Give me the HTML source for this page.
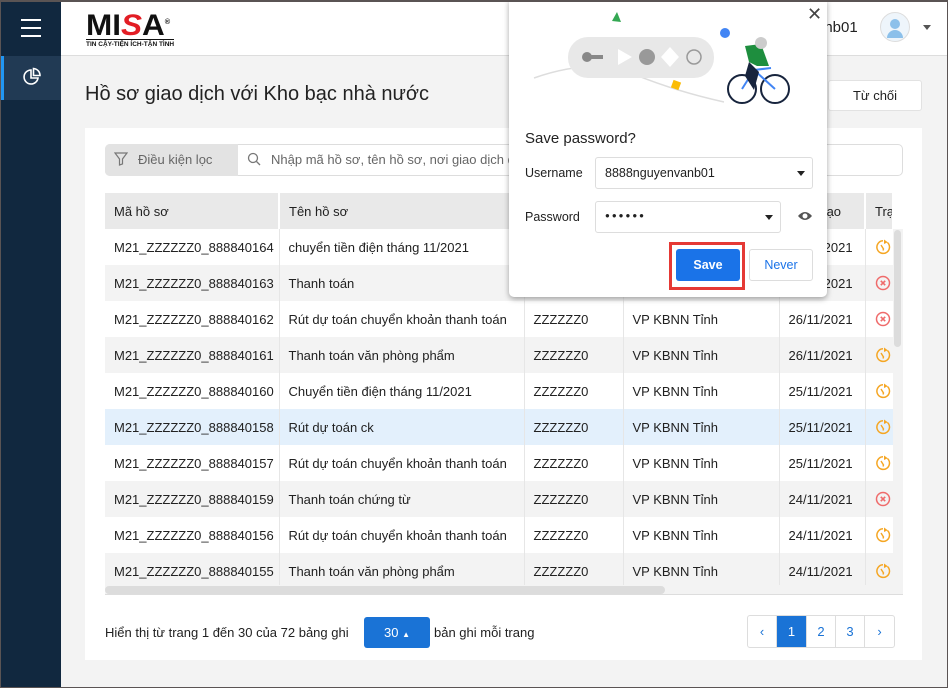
<!DOCTYPE html>
<html><head><meta charset="utf-8"><style>
*{box-sizing:border-box;margin:0;padding:0}
body{width:948px;height:688px;overflow:hidden;font-family:"Liberation Sans",sans-serif;color:#212121;background:#f3f3f3;position:relative;font-size:13px}
.frame{position:absolute;left:0;top:0;width:948px;height:688px;border:1px solid #5a5454;border-top:2px solid #5a5454;pointer-events:none;z-index:50}
.side{position:absolute;left:0;top:0;width:61px;height:688px;background:#11283f}
.hdr{position:absolute;left:61px;top:0;right:0;height:56px;background:#fff;border-bottom:1px solid #ddd}
.abs{position:absolute}
.card{position:absolute;left:85px;top:128px;width:837px;height:532px;background:#fff}
table{border-collapse:collapse;position:absolute;left:105px;top:193px;width:788px;table-layout:fixed}
td,th{height:36px;padding:0 9px;white-space:nowrap;overflow:hidden;text-align:left;font-weight:normal;border-right:1px solid #e6e6e6;font-size:13px}
th{background:#e9e9e9;border-right:2px solid #fff}
tr:nth-child(odd) td{background:#f3f3f3}
tr.sel td{background:#e3f0fc}
td svg{display:block}
.pg{position:absolute;top:615px;height:33px;border:1px solid #ddd;display:flex;background:#fff;border-radius:3px}
.pg div{width:29px;text-align:center;line-height:31px;color:#1a73d6;border-right:1px solid #ddd;font-size:13px}
</style></head><body>
<svg width="0" height="0" style="position:absolute"><defs>
<symbol id="ok" viewBox="0 0 16 16"><path d="M12.5 3.5A6.3 6.3 0 1 1 8 1.8" fill="none" stroke="#f5a623" stroke-width="1.5"/><path d="M9 0.5L12.8 3.3L9 5Z" fill="#f5a623"/><path d="M6 6L8.5 10L8 11.5" fill="none" stroke="#f5a623" stroke-width="1.4"/></symbol>
<symbol id="no" viewBox="0 0 16 16"><circle cx="8" cy="8" r="6.5" fill="none" stroke="#ef6b6b" stroke-width="1.5"/><path d="M5.8 5.8L10.2 10.2M10.2 5.8L5.8 10.2" stroke="#ef6b6b" stroke-width="1.6"/></symbol>
</defs></svg>
<div class="side">
  <div class="abs" style="left:21px;top:19px;width:20px;height:2px;background:#fff;box-shadow:0 8px 0 #fff,0 16px 0 #fff"></div>
  <div class="abs" style="left:0;top:56px;width:61px;height:44px;background:#213a54"></div>
  <div class="abs" style="left:0;top:56px;width:4px;height:44px;background:#2196f3"></div>
  <svg class="abs" style="left:22px;top:67px" width="20" height="20" viewBox="0 0 20 20" fill="none" stroke="#fff" stroke-width="1.6"><path d="M9 3A7 7 0 1 0 16 11H9Z"/><path d="M11.5 1.5V8.5H18A7 7 0 0 0 11.5 1.5Z"/></svg>
</div>
<div class="hdr">
  <div class="abs" style="left:25px;top:9px;font:900 30px 'Liberation Sans';letter-spacing:0px;color:#111;transform:scaleX(1.05);transform-origin:left">MI<span style="color:#e21d24;font-style:italic">S</span>A<sup style="font-size:7px">®</sup></div>
  <div class="abs" style="left:25px;top:39px;font-size:6.5px;font-weight:bold;color:#111;border-top:1px solid #111;padding-top:1px">TIN CẬY-TIỆN ÍCH-TẬN TÌNH</div>
  <div class="abs" style="left:755px;top:19px;font-size:15px">anb01</div>
  <div class="abs" style="left:819px;top:12px;width:30px;height:30px;border-radius:50%;border:1px solid #ddd;background:#eef5fb"><div style="margin:6px auto 0;width:10px;height:10px;border-radius:50%;background:#8cc0ea"></div><div style="margin:1px auto 0;width:16px;height:8px;border-radius:8px 8px 0 0;background:#8cc0ea"></div></div>
  <div class="abs" style="left:862px;top:25px;border:4px solid transparent;border-top:5px solid #555"></div>
</div>
<div class="abs" style="left:85px;top:83px;font-size:20px;color:#222">Hồ sơ giao dịch với Kho bạc nhà nước</div>
<div class="abs" style="left:828px;top:80px;width:94px;height:31px;background:#fff;border:1px solid #e2e2e2;border-radius:3px;text-align:center;line-height:29px">Từ chối</div>
<div class="card"></div>
<div class="abs" style="left:105px;top:144px;width:798px;height:32px;border:1px solid #ddd;border-radius:5px;background:#fff"></div>
<div class="abs" style="left:105px;top:144px;width:133px;height:32px;background:#e3e3e3;border-radius:5px 0 0 5px;color:#666;line-height:32px;padding-left:33px">Điều kiện lọc</div>
<svg class="abs" style="left:114px;top:152px" width="14" height="14" viewBox="0 0 14 14" fill="none" stroke="#777" stroke-width="1.2"><path d="M1 1H13L8.5 7V12L5.5 13V7Z"/></svg>
<svg class="abs" style="left:247px;top:152px" width="14" height="14" viewBox="0 0 14 14" fill="none" stroke="#777" stroke-width="1.3"><circle cx="6" cy="6" r="4.5"/><path d="M9.5 9.5L13 13"/></svg>
<div class="abs" style="left:271px;top:152px;color:#666">Nhập mã hồ sơ, tên hồ sơ, nơi giao dịch để</div>
<table>
<colgroup><col style="width:174px"><col style="width:245px"><col style="width:99px"><col style="width:156px"><col style="width:86px"><col style="width:28px"></colgroup>
<tr><th>Mã hồ sơ</th><th>Tên hồ sơ</th><th></th><th></th><th>Ngày tạo</th><th>Trạng</th></tr>
<tr><td>M21_ZZZZZZ0_888840164</td><td>chuyển tiền điện tháng 11/2021</td><td>ZZZZZZ0</td><td>VP KBNN Tỉnh</td><td>26/11/2021</td><td><svg width="16" height="16"><use href="#ok"/></svg></td></tr>
<tr><td>M21_ZZZZZZ0_888840163</td><td>Thanh toán</td><td>ZZZZZZ0</td><td>VP KBNN Tỉnh</td><td>26/11/2021</td><td><svg width="16" height="16"><use href="#no"/></svg></td></tr>
<tr><td>M21_ZZZZZZ0_888840162</td><td> Rút dự toán chuyển khoản thanh toán</td><td>ZZZZZZ0</td><td>VP KBNN Tỉnh</td><td>26/11/2021</td><td><svg width="16" height="16"><use href="#no"/></svg></td></tr>
<tr><td>M21_ZZZZZZ0_888840161</td><td>Thanh toán văn phòng phẩm</td><td>ZZZZZZ0</td><td>VP KBNN Tỉnh</td><td>26/11/2021</td><td><svg width="16" height="16"><use href="#ok"/></svg></td></tr>
<tr><td>M21_ZZZZZZ0_888840160</td><td>Chuyển tiền điện tháng 11/2021</td><td>ZZZZZZ0</td><td>VP KBNN Tỉnh</td><td>25/11/2021</td><td><svg width="16" height="16"><use href="#ok"/></svg></td></tr>
<tr class="sel"><td>M21_ZZZZZZ0_888840158</td><td>Rút dự toán ck</td><td>ZZZZZZ0</td><td>VP KBNN Tỉnh</td><td>25/11/2021</td><td><svg width="16" height="16"><use href="#ok"/></svg></td></tr>
<tr><td>M21_ZZZZZZ0_888840157</td><td>Rút dự toán chuyển khoản thanh toán</td><td>ZZZZZZ0</td><td>VP KBNN Tỉnh</td><td>25/11/2021</td><td><svg width="16" height="16"><use href="#ok"/></svg></td></tr>
<tr><td>M21_ZZZZZZ0_888840159</td><td>Thanh toán chứng từ</td><td>ZZZZZZ0</td><td>VP KBNN Tỉnh</td><td>24/11/2021</td><td><svg width="16" height="16"><use href="#no"/></svg></td></tr>
<tr><td>M21_ZZZZZZ0_888840156</td><td> Rút dự toán chuyển khoản thanh toán</td><td>ZZZZZZ0</td><td>VP KBNN Tỉnh</td><td>24/11/2021</td><td><svg width="16" height="16"><use href="#ok"/></svg></td></tr>
<tr><td>M21_ZZZZZZ0_888840155</td><td>Thanh toán văn phòng phẩm</td><td>ZZZZZZ0</td><td>VP KBNN Tỉnh</td><td>24/11/2021</td><td><svg width="16" height="16"><use href="#ok"/></svg></td></tr>
</table>
<div class="abs" style="left:893px;top:229px;width:10px;height:366px;background:#f3f3f3"></div>
<div class="abs" style="left:894px;top:230px;width:7px;height:117px;background:#dcdcdc;border-radius:4px"></div>
<div class="abs" style="left:105px;top:585px;width:798px;height:10px;background:#f3f3f3;border-bottom:1px solid #ddd"></div>
<div class="abs" style="left:105px;top:586px;width:560px;height:8px;background:#dcdcdc;border-radius:4px"></div>
<div class="abs" style="left:105px;top:625px">Hiển thị từ trang 1 đến 30 của 72 bảng ghi</div>
<div class="abs" style="left:364px;top:617px;width:66px;height:31px;background:#1a73d6;border-radius:3px;color:#fff;text-align:center;line-height:31px">30 <span style="font-size:8px">▲</span></div>
<div class="abs" style="left:434px;top:625px">bản ghi mỗi trang</div>
<div class="pg" style="left:747px"><div>‹</div><div style="background:#1a73d6;color:#fff;width:30px">1</div><div>2</div><div>3</div><div style="border:none">›</div></div>

<div class="abs" style="left:509px;top:0;width:318px;height:297px;background:#fff;border-radius:0 0 5px 5px;box-shadow:0 2px 6px rgba(0,0,0,.35);z-index:10">
  <svg class="abs" style="left:0;top:0" width="318" height="120">
    <path d="M25 78Q70 62 110 68Q160 90 215 102" fill="none" stroke="#ddd" stroke-width="1.5"/>
    <rect x="59" y="37" width="146" height="41" rx="20" fill="#e8e8e8"/>
    <circle cx="78" cy="57" r="5" fill="#888"/><rect x="80" y="55" width="14" height="4" fill="#888"/>
    <path d="M109 49L123 57L109 65Z" fill="#fff"/><circle cx="138" cy="57" r="8" fill="#999"/>
    <path d="M161 47L170 57L161 67L152 57Z" fill="#fff"/><circle cx="185" cy="57" r="7" fill="none" stroke="#999" stroke-width="1.5"/>
    <path d="M108 12L112 22L103 21Z" fill="#34a853"/><circle cx="216" cy="33" r="5" fill="#4285f4"/>
    <rect x="163" y="81" width="8" height="8" fill="#fbbc05" transform="rotate(20 167 85)"/>
    <circle cx="233" cy="89" r="14" fill="none" stroke="#17243d" stroke-width="2"/><circle cx="266" cy="89" r="14" fill="none" stroke="#17243d" stroke-width="2"/>
    <path d="M233 89L245 70L266 89M245 70L262 68" fill="none" stroke="#4285f4" stroke-width="2"/>
    <path d="M236 46L252 44L260 66L248 66L240 62Z" fill="#1e8e3e"/><path d="M240 62L236 76L245 90L250 72Z" fill="#17243d"/>
    <circle cx="252" cy="43" r="6" fill="#ccc"/>
  </svg>
  <div class="abs" style="left:298px;top:4px;font-size:18px;color:#444">✕</div>
  <div class="abs" style="left:16px;top:130px;font-size:15px;color:#222">Save password?</div>
  <div class="abs" style="left:16px;top:166px;font-size:12.5px">Username</div>
  <div class="abs" style="left:86px;top:157px;width:218px;height:32px;border:1px solid #ddd;border-radius:3px;padding:8px 9px;font-size:12.5px">8888nguyenvanb01</div>
  <div class="abs" style="left:288px;top:171px;border:4px solid transparent;border-top:5px solid #222"></div>
  <div class="abs" style="left:16px;top:210px;font-size:12.5px">Password</div>
  <div class="abs" style="left:86px;top:201px;width:186px;height:32px;border:1px solid #ddd;border-radius:3px;padding:9px 9px;font-size:8px;letter-spacing:2px">●●●●●●</div>
  <div class="abs" style="left:256px;top:215px;border:4px solid transparent;border-top:5px solid #222"></div>
  <svg class="abs" style="left:288px;top:210px" width="16" height="12" viewBox="0 0 16 12"><path d="M1 6Q8 -2 15 6Q8 14 1 6Z" fill="#555"/><circle cx="8" cy="6" r="2.5" fill="#fff"/></svg>
  <div class="abs" style="left:160px;top:242px;width:76px;height:48px;border:3px solid #e53935"></div>
  <div class="abs" style="left:167px;top:249px;width:64px;height:32px;background:#1a73e8;border-radius:3px;color:#fff;text-align:center;line-height:32px;font-weight:bold;font-size:12.5px">Save</div>
  <div class="abs" style="left:240px;top:249px;width:64px;height:32px;border:1px solid #ddd;border-radius:3px;color:#1a73e8;text-align:center;line-height:30px;font-size:12.5px">Never</div>
</div>
<div class="frame"></div>
</body></html>
